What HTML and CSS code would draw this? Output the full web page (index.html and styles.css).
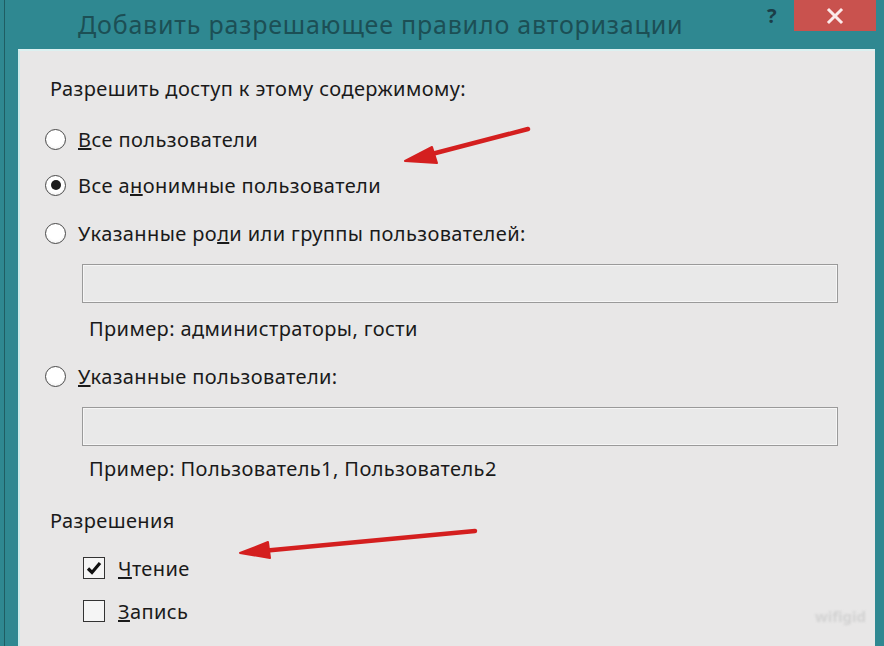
FILE: index.html
```html
<!DOCTYPE html>
<html lang="ru">
<head>
<meta charset="utf-8">
<title>Добавить разрешающее правило авторизации</title>
<link rel="stylesheet" href="styles.css">
</head>
<body>
<div class="window">
  <div class="titlebar">
    <div class="title">Добавить разрешающее правило авторизации</div>
    <div class="help">?</div>
    <div class="close">
      <svg width="18" height="18" viewBox="0 0 18 18"><path d="M3 3 L15 15 M15 3 L3 15" stroke="#fbeaea" stroke-width="3" stroke-linecap="square"/></svg>
    </div>
  </div>
  <div class="panel">
    <div class="heading">Разрешить доступ к этому содержимому:</div>
    <div class="row r1"><span class="radio"></span><span><u>В</u>се пользователи</span></div>
    <div class="row r2"><span class="radio on"></span><span>Все а<u>н</u>онимные пользователи</span></div>
    <div class="row r3"><span class="radio"></span><span>Указанные ро<u>л</u>и или группы пользователей:</span></div>
    <div class="input i1"></div>
    <div class="hint h1">Пример: администраторы, гости</div>
    <div class="row r4"><span class="radio"></span><span><u>У</u>казанные пользователи:</span></div>
    <div class="input i2"></div>
    <div class="hint h2">Пример: Пользователь1, Пользователь2</div>
    <div class="heading perm">Разрешения</div>
    <div class="row c1"><span class="check"><svg width="18" height="18" viewBox="0 0 18 18"><path d="M3 9.5 L7 13.5 L15 4" fill="none" stroke="#111" stroke-width="3.2"/></svg></span><span><u>Ч</u>тение</span></div>
    <div class="row c2"><span class="check"></span><span><u>З</u>апись</span></div>
    <div class="watermark">wifigid</div>
  </div>
</div>
<svg class="arrows" width="884" height="646" viewBox="0 0 884 646">
  <g fill="#d41f1f" stroke="#d41f1f" stroke-linejoin="round">
    <line x1="528" y1="129" x2="428" y2="155" stroke-width="4.5" stroke-linecap="round"/>
    <polygon points="405,161 432,147 437,163" stroke-width="2"/>
    <line x1="475" y1="531" x2="262" y2="551" stroke-width="4.5" stroke-linecap="round"/>
    <polygon points="240,553 268,542 270,558" stroke-width="2"/>
  </g>
</svg>
</body>
</html>
```
FILE: styles.css
```css
html, body {
  margin: 0;
  padding: 0;
}
body {
  width: 884px;
  height: 646px;
  overflow: hidden;
  background: #2f8891;
  font-family: "Noto Sans", "Open Sans", sans-serif;
  position: relative;
}
.window {
  width: 884px;
  height: 646px;
  display: flex;
  flex-direction: column;
  border-left: 4px solid #2f8891;
  box-sizing: border-box;
  box-shadow: inset 1px 0 0 #1f5d63;
}
.titlebar {
  height: 49px;
  display: flex;
  align-items: flex-start;
  position: relative;
}
.title {
  margin-left: 74px;
  margin-top: 7px;
  font-size: 25px;
  color: #1c4f55;
  letter-spacing: 0.8px;
  flex: 1;
  white-space: nowrap;
}
.help {
  width: 20px;
  margin-top: 2px;
  font-size: 20px;
  font-weight: bold;
  color: #1b3d48;
  margin-right: 7px;
}
.close {
  width: 82px;
  height: 31px;
  background: #c9524e;
  display: flex;
  align-items: center;
  justify-content: center;
  margin-right: 8px;
}
.panel {
  flex: 1;
  margin-left: 14px;
  margin-right: 9px;
  background: #e8e7e7;
  border-top: 2px solid #dcf1f1;
  border-left: 2px solid #cdebec;
  position: relative;
  color: #1a1a1a;
  font-size: 20px;
  letter-spacing: 0.4px;
  padding-left: 25px;
}
.heading {
  height: 30px;
  display: flex;
  align-items: center;
  margin-top: 22px;
  padding-left: 5px;
}
.row {
  height: 30px;
  display: flex;
  align-items: center;
  gap: 12px;
}
.r1 { margin-top: 21px; }
.r2 { margin-top: 16px; }
.r3 { margin-top: 18px; }
.r4 { margin-top: 18px; }
.radio {
  width: 19px;
  height: 19px;
  border: 1px solid #4a4a4a;
  border-radius: 50%;
  background: radial-gradient(circle at 50% 40%, #ffffff 55%, #e6e6e6 100%);
  display: flex;
  align-items: center;
  justify-content: center;
  flex: none;
}
.radio.on::after {
  content: "";
  width: 10px;
  height: 10px;
  border-radius: 50%;
  background: #1a1a1a;
}
.input {
  margin-left: 37px;
  width: 754px;
  height: 37px;
  border: 1px solid #9a9a9a;
  background: #e9e9e9;
  box-shadow: inset 0 0 0 1px #f6f6f6;
  margin-top: 16px;
}
.hint {
  height: 30px;
  display: flex;
  align-items: center;
  padding-left: 44px;
}
.h1 { margin-top: 10px; }
.h2 { margin-top: 7px; }
.perm { margin-top: 22px; }
.c1, .c2 { padding-left: 38px; gap: 13px; }
.c1 { margin-top: 18px; }
.c2 { margin-top: 13px; }
.check {
  width: 20px;
  height: 20px;
  border: 1px solid #333;
  background: #f5f5f5;
  display: flex;
  align-items: center;
  justify-content: center;
  flex: none;
}
.watermark {
  position: absolute;
  right: 9px;
  bottom: 20px;
  font-size: 15px;
  font-weight: bold;
  letter-spacing: 0;
  color: #d2d2d2;
  filter: blur(1.2px);
}
.arrows {
  position: absolute;
  left: 0;
  top: 0;
  pointer-events: none;
}
```
